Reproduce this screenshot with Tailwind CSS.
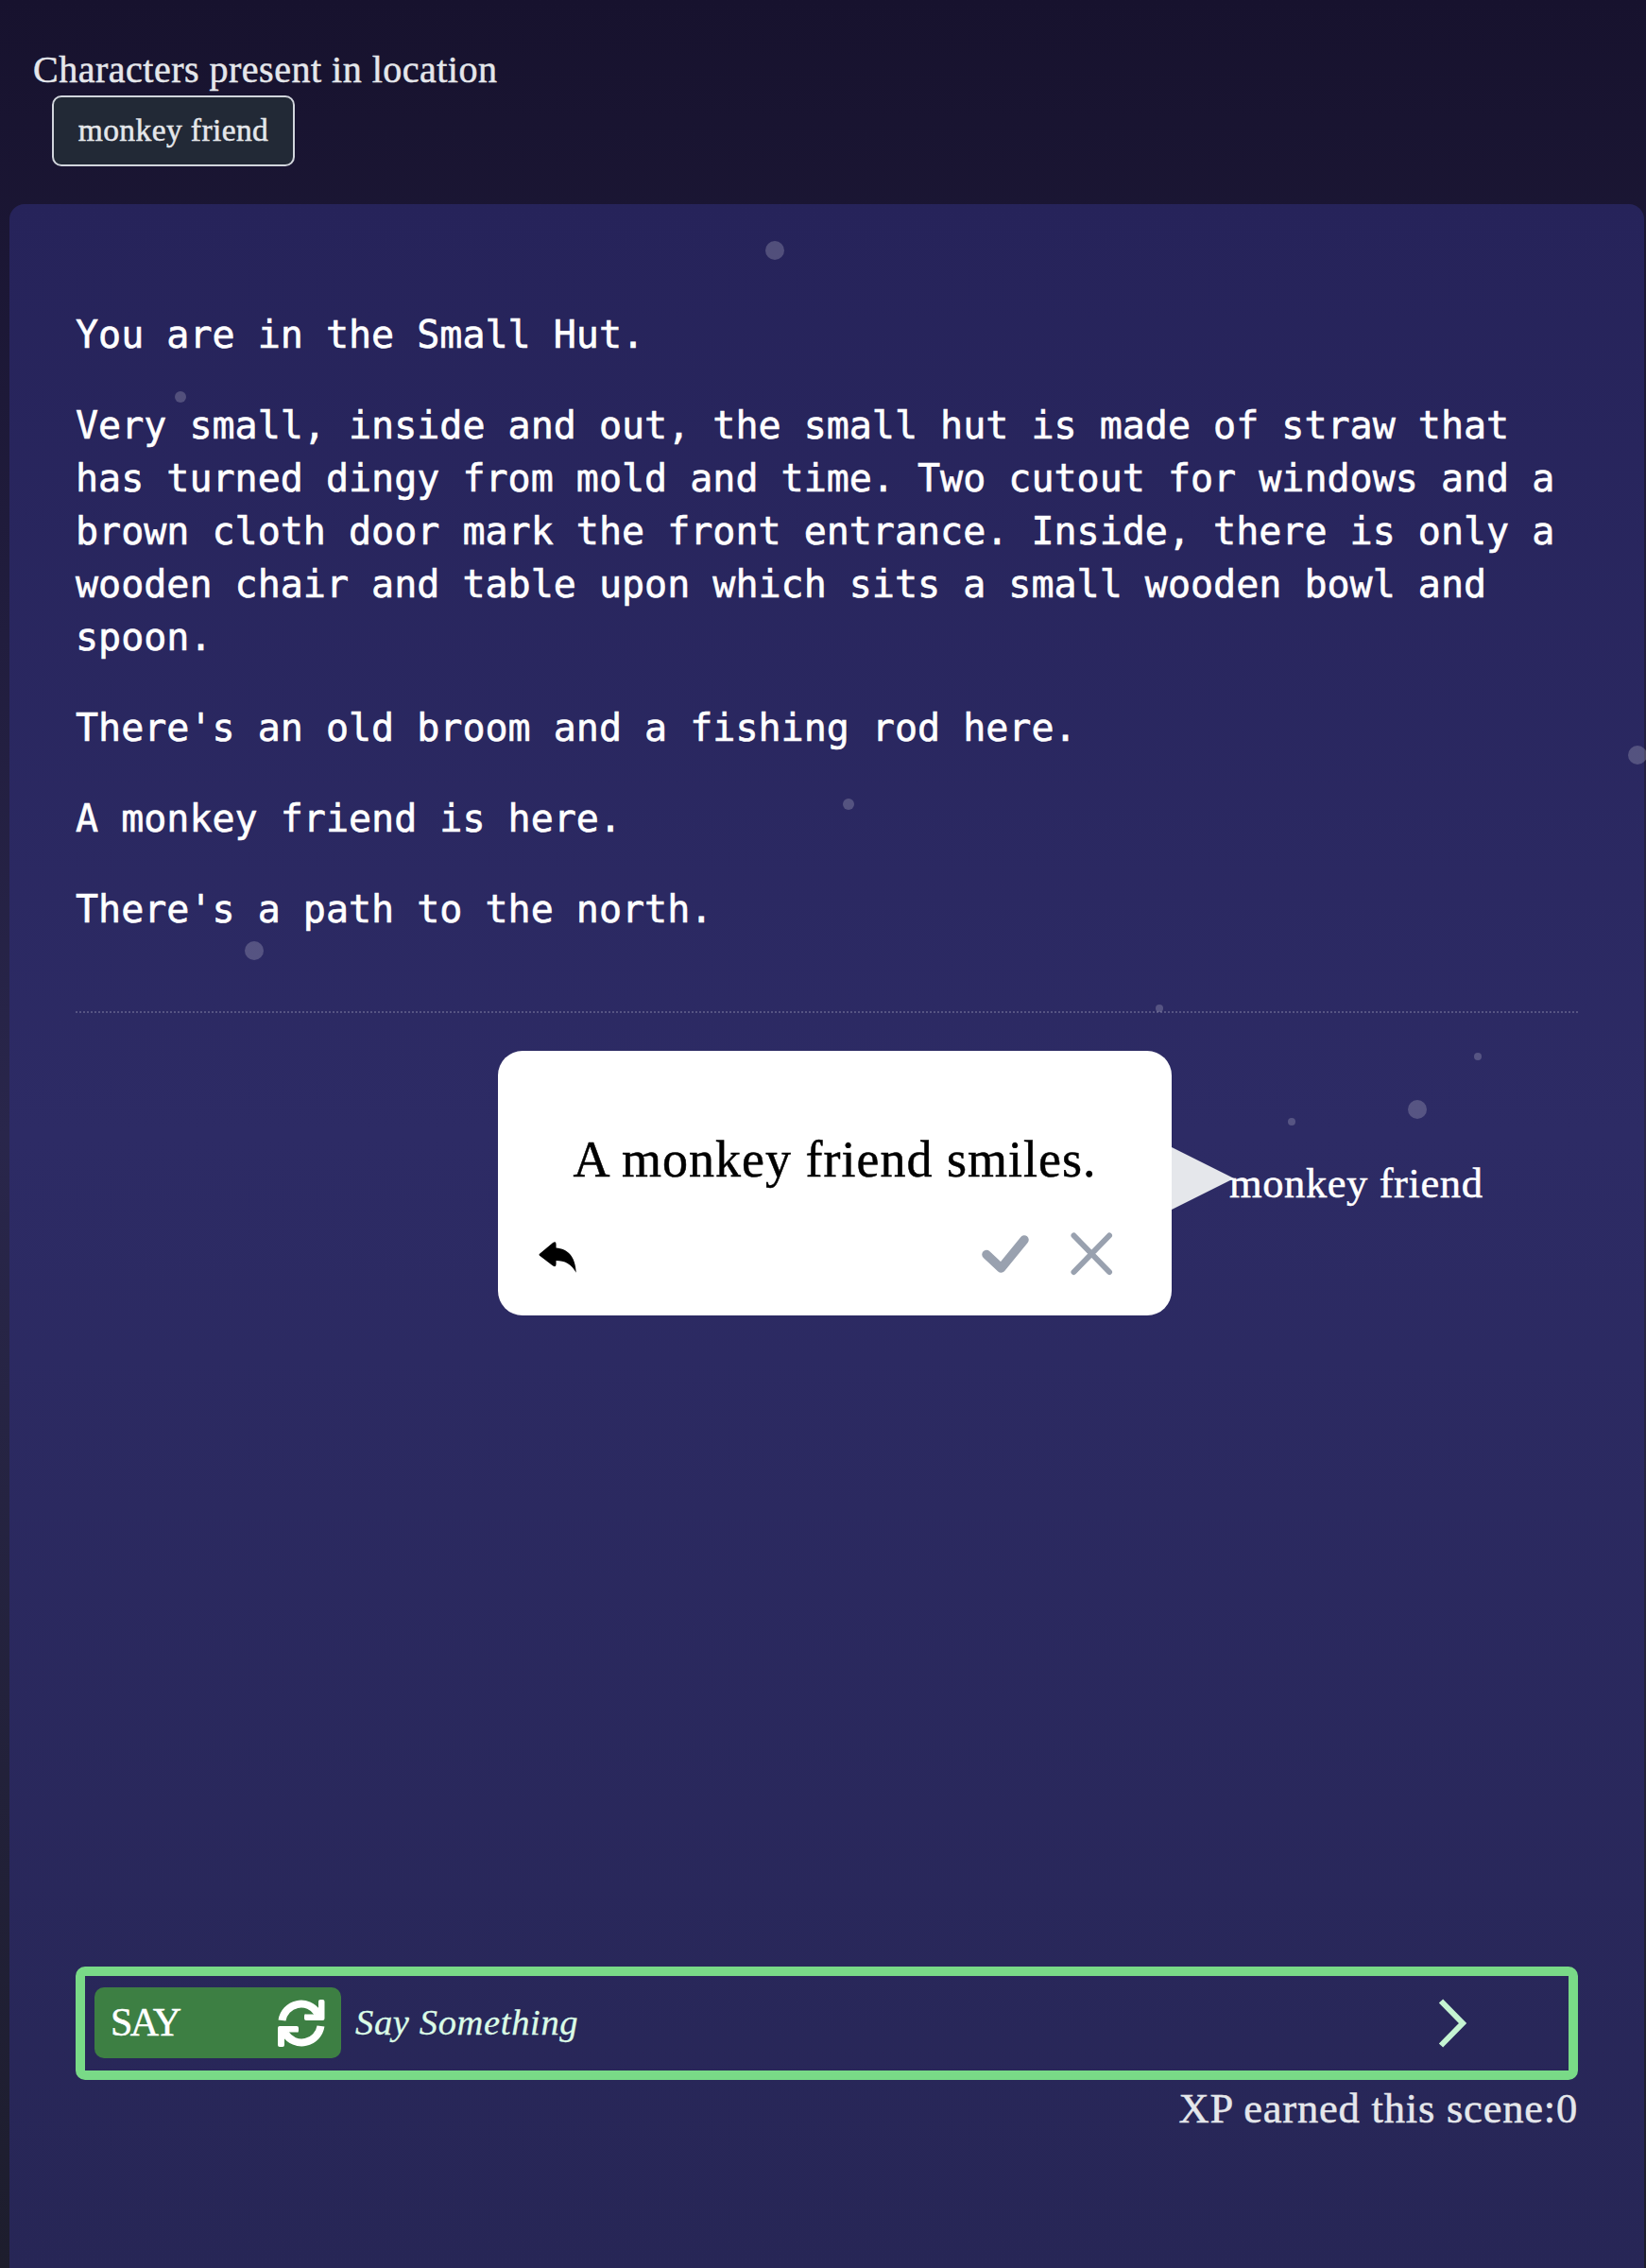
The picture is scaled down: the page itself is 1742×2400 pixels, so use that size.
<!DOCTYPE html>
<html lang="en">
<head>
<meta charset="utf-8">
<title>Small Hut</title>
<script src="https://cdn.jsdelivr.net/npm/@tailwindcss/browser@4"></script>
</head>
<body class="relative h-[2400px] w-[1742px] overflow-hidden bg-linear-to-b from-[#17122e] via-[#29264b] via-50% to-[#1d1d2d] font-['Liberation_Serif',serif] [-webkit-text-stroke:0.5px]">
  <header class="flex h-[216px] flex-col items-start pt-[47px] pl-[35px] text-gray-200">
    <h1 class="text-[40px] leading-[54px] tracking-[0.5px]">Characters present in location</h1>
    <button class="ml-5 flex h-[75px] w-[257px] items-center justify-center rounded-[10px] border-2 border-gray-300 bg-[#222936] text-[33.5px] tracking-[0.4px]">monkey friend</button>
  </header>
  <main class="ml-[10px] flex h-[2184px] w-[1730px] flex-col rounded-t-2xl bg-linear-to-b from-[#26235a] via-[#2d2b65] via-45% to-[#272656] px-[70px]">
    <section class="flex h-[856px] flex-col gap-10 border-b-2 border-dotted border-white/20 pt-[110px] font-['DejaVu_Sans_Mono',monospace] text-[40px] leading-[56px] text-white [-webkit-text-stroke:0.6px]">
      <p>You are in the Small Hut.</p>
      <p>Very small, inside and out, the small hut is made of straw that<br>has turned dingy from mold and time. Two cutout for windows and a<br>brown cloth door mark the front entrance. Inside, there is only a<br>wooden chair and table upon which sits a small wooden bowl and<br>spoon.</p>
      <p>There's an old broom and a fishing rod here.</p>
      <p>A monkey friend is here.</p>
      <p>There's a path to the north.</p>
    </section>
    <section class="mt-10 ml-[447px] flex h-[280px] items-center">
      <div class="flex h-[280px] w-[713px] flex-col rounded-[26px] bg-white px-10 pt-[83px] text-black">
        <p class="text-center text-[54px] leading-[64px] tracking-[1px] whitespace-nowrap">A monkey friend smiles.</p>
        <div class="mt-[43px] flex items-center">
          <svg class="mt-2 ml-[3px] h-[36px] w-[42px]" viewBox="0 0 42 36"><path d="M1 12 14 1.200Q17.500-1 17.500 2.500V6.200C29 7 37 15 37.500 31 33 22 26 18.800 17.500 18.800V22.500Q17.500 26 14 23.800L1 14Q0 13 1 12Z" fill="currentColor" transform="translate(0 1) scale(1.06)"/></svg>
          <svg class="ml-[426px] h-[50px] w-[52px] text-gray-400" viewBox="0 0 52 50"><path d="M6 25.500 21.500 40 46 10" fill="none" stroke="currentColor" stroke-width="9.500" stroke-linecap="round" stroke-linejoin="round"/></svg>
          <svg class="ml-[42px] h-[48px] w-[48px] text-gray-400" viewBox="0 0 48 48"><path d="M4.500 4.500 42 43M42 4.500 4.500 43" fill="none" stroke="currentColor" stroke-width="6" stroke-linecap="round"/></svg>
        </div>
      </div>
      <svg class="mt-[-11px] h-[66px] w-[66px] text-gray-200" viewBox="0 0 66 66"><path d="M0 0 66 33 0 66Z" fill="currentColor"/></svg>
      <span class="-ml-[5px] text-[44.5px] tracking-[0.6px] whitespace-nowrap text-white">monkey friend</span>
    </section>
    <form class="mt-[689px] flex h-[120px] items-center rounded-[10px] border-[10px] border-[#79da87] pr-[107px] pl-[10px]">
      <button type="button" class="mb-[1px] flex h-[75px] w-[261px] items-center justify-between rounded-[10px] bg-[#3d7f43] pr-[16px] pl-[17px] text-[42px] tracking-[-2.6px] text-white">
        <span>SAY</span>
        <svg class="h-[52px] w-[52px]" viewBox="0 0 52 52"><g fill="none" stroke="currentColor" stroke-width="8"><path d="M5.500 23A20.500 20.500 0 0 1 43 15"/><path d="M46.500 29A20.500 20.500 0 0 1 9 37"/></g><path d="M30 16.500H40L44 12V3Q44 1 46 1H48.500Q50.500 1 50.500 3V21Q50.500 23 48.500 23H31Q29 23 29 21V18Q29 16 31 16Z M22 35.500H12L8 40V49Q8 51 6 51H3Q1 51 1 49V31Q1 29 3 29H21Q23 29 23 31V34Q23 36 21 36Z" fill="currentColor"/></svg>
      </button>
      <span class="ml-[15px] grow text-[38.5px] tracking-[0.65px] text-green-100 italic [-webkit-text-stroke:0.3px]">Say Something</span>
      <svg class="h-[52px] w-[32px]" viewBox="0 0 32 52"><path d="M4 2.500 27 26 4 49.500" fill="none" stroke="#c5f4d2" stroke-width="6"/></svg>
    </form>
    <p class="mt-[2px] text-right text-[44.5px] leading-[56px] tracking-[0.8px] text-gray-200">XP earned this scene:0</p>
  </main>
  <div aria-hidden="true">
    <i class="absolute top-[255px] left-[810px] size-5 rounded-full bg-white/20"></i>
    <i class="absolute top-[414px] left-[185px] size-3 rounded-full bg-white/20"></i>
    <i class="absolute top-[789px] left-[1723px] size-5 rounded-full bg-white/20"></i>
    <i class="absolute top-[845px] left-[892px] size-3 rounded-full bg-white/20"></i>
    <i class="absolute top-[996px] left-[259px] size-5 rounded-full bg-white/20"></i>
    <i class="absolute top-[1063px] left-[1223px] size-2 rounded-full bg-white/20"></i>
    <i class="absolute top-[1114px] left-[1560px] size-2 rounded-full bg-white/20"></i>
    <i class="absolute top-[1164px] left-[1490px] size-5 rounded-full bg-white/20"></i>
    <i class="absolute top-[1183px] left-[1363px] size-2 rounded-full bg-white/20"></i>
  </div>
</body>
</html>
